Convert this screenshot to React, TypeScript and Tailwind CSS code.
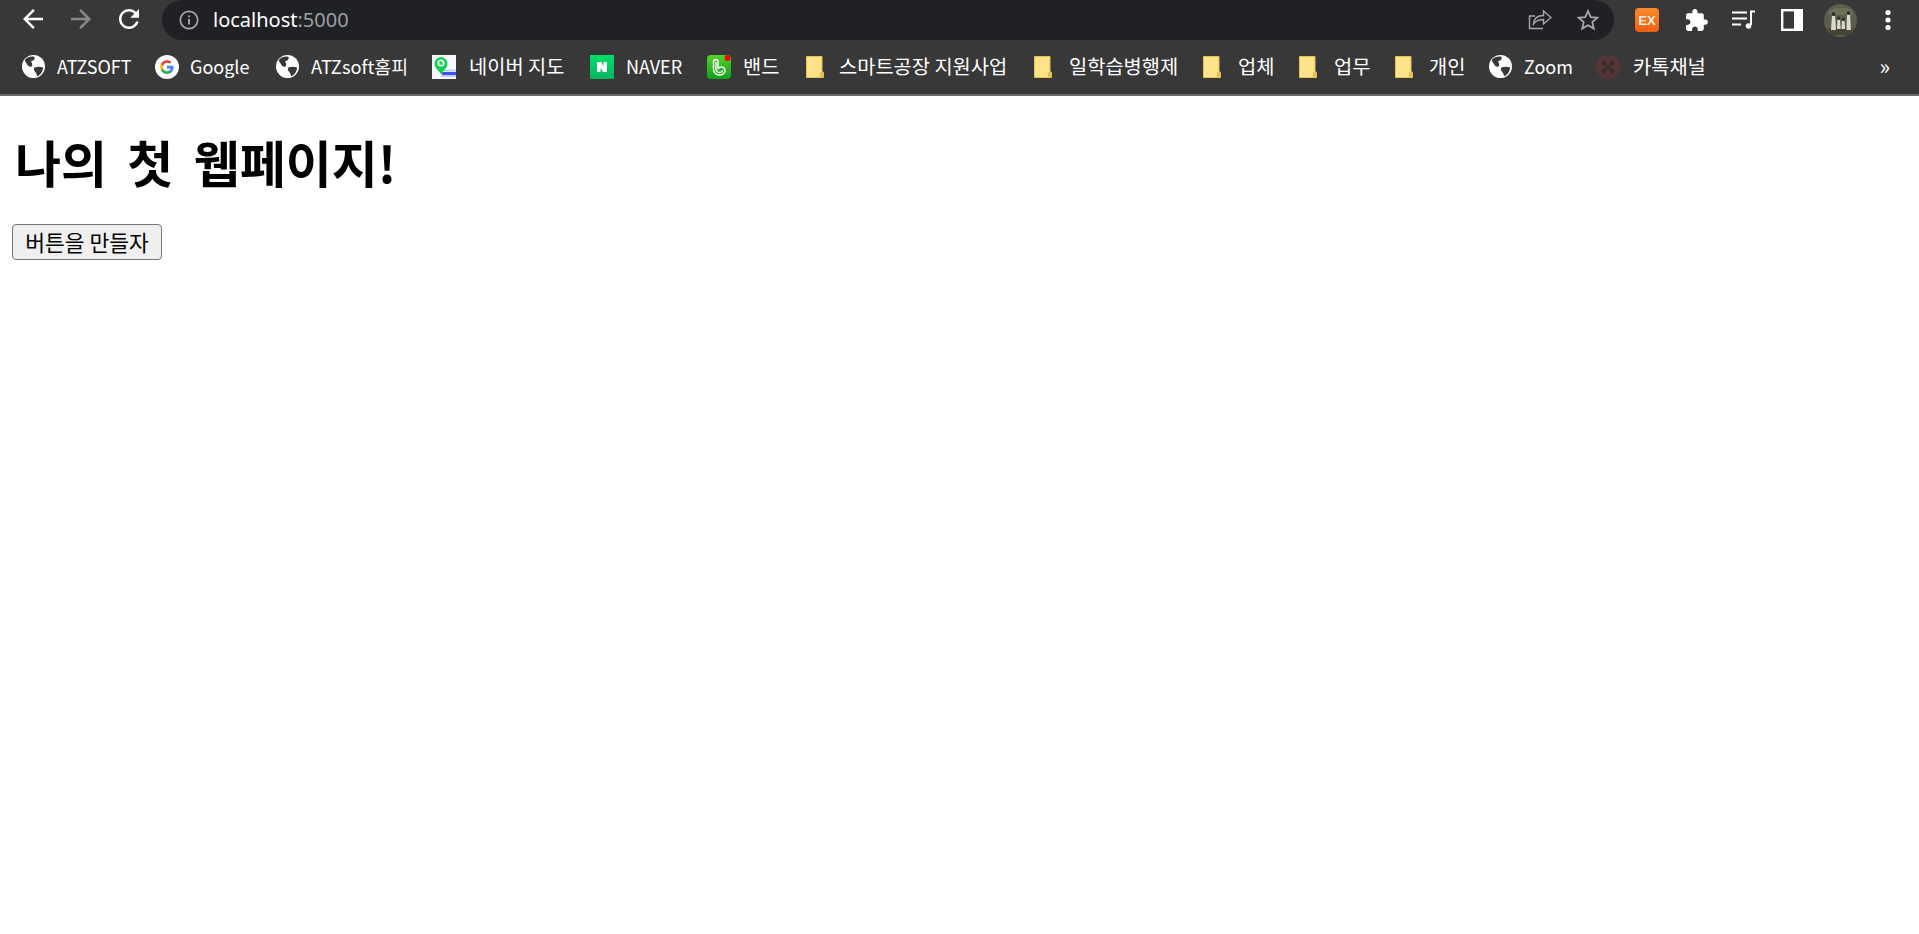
import type { ReactNode } from 'react'

const Globe = () => (
  <svg width="23" height="23" viewBox="0 0 24 24" className="shrink-0">
    <circle cx="12" cy="12" r="12" fill="#fff" />
    <path d="M3 5c3-3 7-4 10-3 1 2-1 4-3 4-1 2 2 3 0 6-2 1-4-1-5-3-1-1-2-2-2-4zM13 13c3-1 6-1 9 0 0 4-3 8-6 9-1-2-1-3-2-4-2-2-2-4-1-5z" fill="#383838" />
  </svg>
)

const GoogleIcon = () => (
  <svg width="24" height="24" viewBox="0 0 24 24" className="shrink-0">
    <circle cx="12" cy="12" r="12" fill="#fff" />
    <path d="M18.6 12.2c0-.5 0-1-.1-1.400H12v2.700h3.700c-.2.900-.6 1.600-1.400 2.100v1.700h2.200c1.300-1.200 2.100-3 2.100-5.100z" fill="#4285f4" />
    <path d="M12 19c1.900 0 3.400-.6 4.500-1.700l-2.200-1.700c-.6.400-1.400.7-2.300.7-1.800 0-3.300-1.200-3.900-2.900H5.900v1.800C7 17.500 9.300 19 12 19z" fill="#34a853" />
    <path d="M8.100 13.400a4.200 4.200 0 010-2.700V8.900H5.900a7 7 0 000 6.300z" fill="#fbbc05" />
    <path d="M12 7.800c1 0 1.900.3 2.600 1l2-2A7 7 0 005.900 8.900l2.200 1.800C8.700 9 10.200 7.800 12 7.800z" fill="#ea4335" />
  </svg>
)

const MapIcon = () => (
  <svg width="24" height="24" viewBox="0 0 24 24" className="shrink-0">
    <rect width="24" height="24" fill="#f6f9ff" />
    <path d="M10 14.500h14v2H12z" fill="#c3cdf8" />
    <path d="M10 17h14v3H10z" fill="#3f55e6" />
    <path d="M9 20h15v2H9z" fill="#c3cdf8" />
    <path d="M9 2a6.500 6.500 0 00-6.500 6.500C2.500 13 7 15.500 9 19.500c2-4 6.500-6.500 6.500-11A6.500 6.500 0 009 2z" fill="#12d24f" />
    <circle cx="9" cy="8" r="3.500" fill="#fff" />
    <path d="M7.400 6h1.100l1 1.800V6h1.100v4H9.500l-1-1.800V10H7.400z" fill="#12d24f" />
  </svg>
)

const NaverIcon = () => (
  <svg width="24" height="24" viewBox="0 0 24 24" className="shrink-0">
    <defs>
      <linearGradient id="nv" x1="0" y1="0" x2="0" y2="1">
        <stop offset="0" stopColor="#03de6a" />
        <stop offset="1" stopColor="#03b25f" />
      </linearGradient>
    </defs>
    <rect width="24" height="24" fill="url(#nv)" />
    <path d="M7 7h4l2.500 4V7H17v10h-4l-2.500-4v4H7z" fill="#fff" />
  </svg>
)

const BandIcon = () => (
  <svg width="24" height="24" viewBox="0 0 24 24" className="shrink-0">
    <defs>
      <linearGradient id="bd" x1="0" y1="0" x2="0" y2="1">
        <stop offset="0" stopColor="#55d32a" />
        <stop offset="1" stopColor="#0fa01a" />
      </linearGradient>
    </defs>
    <rect width="24" height="24" rx="4" fill="url(#bd)" />
    <path d="M6.500 7c0-3.500 4.500-3.500 4.500 0v7c1.500-3 7-2.500 7 1.500 0 3-3 4.500-5.500 4.500-3.500 0-6-2.500-6-6z" fill="none" stroke="#fff" strokeWidth="1.500" />
    <path d="M9 7v6.500c0 2.500 1.500 4 3.500 4 1.500 0 3-1 3-2.200" fill="none" stroke="#fff" strokeWidth="1.300" />
    <circle cx="20.500" cy="3" r="3" fill="#f00" />
  </svg>
)

const FolderIcon = () => (
  <svg width="18" height="22" viewBox="0 0 18 22" className="shrink-0">
    <path d="M.5.500h15.500v15l1.500 1v5H.5z" fill="#ffe38a" stroke="#e6bf4e" />
    <path d="M14 21v-4l1.500-1.500h1.500v6z" fill="#e6bf4e" />
  </svg>
)

const KakaoIcon = () => (
  <svg width="24" height="24" viewBox="0 0 24 24" className="shrink-0">
    <circle cx="12" cy="12" r="12" fill="#553636" />
    <path d="M8 8l8 8M16 8l-8 8" stroke="#382c2c" strokeWidth="1.800" />
    <circle cx="8" cy="8" r="2.400" fill="#382c2c" />
    <circle cx="16" cy="8" r="2.400" fill="#382c2c" />
    <circle cx="8" cy="16" r="2.400" fill="#382c2c" />
    <circle cx="16" cy="16" r="2.400" fill="#382c2c" />
  </svg>
)

const bookmarks: { icon: ReactNode; label: string; box: string }[] = [
  { icon: <Globe />, label: 'ATZSOFT', box: 'ml-[12px] w-[72px] text-[18px]' },
  { icon: <GoogleIcon />, label: 'Google', box: 'ml-[11px] w-[60px] text-[18px]' },
  { icon: <Globe />, label: 'ATZsoft홈피', box: 'ml-[12px] w-[95px] text-[18.3px]' },
  { icon: <MapIcon />, label: '네이버 지도', box: 'ml-[13px] w-[95px] text-[19.8px]' },
  { icon: <NaverIcon />, label: 'NAVER', box: 'ml-[12px] w-[55px] text-[18px]' },
  { icon: <BandIcon />, label: '밴드', box: 'ml-[12px] w-[37px] text-[19.8px]' },
  { icon: <FolderIcon />, label: '스마트공장 지원사업', box: 'ml-[15px] w-[169px] text-[19.8px]' },
  { icon: <FolderIcon />, label: '일학습병행제', box: 'ml-[17px] w-[108px] text-[19.8px]' },
  { icon: <FolderIcon />, label: '업체', box: 'ml-[17px] w-[35px] text-[19.8px]' },
  { icon: <FolderIcon />, label: '업무', box: 'ml-[17px] w-[35px] text-[19.8px]' },
  { icon: <FolderIcon />, label: '개인', box: 'ml-[16px] w-[34px] text-[19.8px]' },
  { icon: <Globe />, label: 'Zoom', box: 'ml-[12px] w-[46px] text-[18px]' },
  { icon: <KakaoIcon />, label: '카톡채널', box: 'ml-[13px] w-[70px] text-[19.8px]' },
]

export default function App() {
  return (
    <div className="min-h-[934px] bg-white font-['Noto_Sans_CJK_KR','Noto_Sans',sans-serif] text-black">
      {/* Browser chrome */}
      <div className="bg-[#383838] border-b-2 border-[#6b6b6b]">
        <div className="flex items-start h-10">
          <div className="flex items-center gap-[18px] h-10 w-[162px] shrink-0 pl-[18px]">
            <svg width="30" height="30" viewBox="0 0 24 24" fill="#fff" className="-mt-[2px] shrink-0">
              <path d="M20 11H7.830l5.590-5.590L12 4l-8 8 8 8 1.410-1.410L7.830 13H20v-2z" />
            </svg>
            <svg width="30" height="30" viewBox="0 0 24 24" fill="#8a8a8a" className="-mt-[2px] shrink-0">
              <path d="M12 4l-1.410 1.410L16.170 11H4v2h12.170l-5.580 5.590L12 20l8-8z" />
            </svg>
            <svg width="30" height="30" viewBox="0 0 24 24" fill="#fff" className="-mt-[2px] shrink-0">
              <path d="M17.650 6.350C16.200 4.900 14.210 4 12 4c-4.420 0-7.990 3.580-7.990 8s3.570 8 7.990 8c3.730 0 6.840-2.550 7.730-6h-2.080c-.820 2.330-3.040 4-5.650 4-3.310 0-6-2.690-6-6s2.690-6 6-6c1.660 0 3.140.690 4.220 1.780L13 11h7V4l-2.350 2.350z" />
            </svg>
          </div>
          <div className="flex items-center h-10 w-[1452px] shrink-0 bg-[#202124] rounded-[20px] pl-[17px] pr-[15px]">
            <svg width="20" height="20" viewBox="0 0 20 20" fill="none" className="shrink-0">
              <circle cx="10" cy="10" r="8.700" stroke="#a8a9ab" strokeWidth="1.700" />
              <path d="M10 9v5.500M10 5.500v1.800" stroke="#a8a9ab" strokeWidth="1.900" />
            </svg>
            <div className="ml-[14px] text-[20px] leading-none font-['Noto_Sans',sans-serif] -mt-[1px]">
              <span className="text-white">localhost</span>
              <span className="text-[#9aa0a6]">:5000</span>
            </div>
            <div className="ml-auto flex items-center gap-[25px]">
              <svg width="24" height="24" viewBox="0 0 24 24" fill="none" stroke="#a8a9ab" strokeWidth="1.400">
                <path d="M15 20.500H1.500V8H7" />
                <path d="M5.500 16c.500-6 4.500-8.500 10-8.500V3L23 9.500l-7.500 6.500v-4.500c-4 0-7.500 1-10 4.500z" />
              </svg>
              <svg width="22" height="22" viewBox="0 0 22 22" fill="none" stroke="#a8a9ab" strokeWidth="1.800">
                <path d="M11 2l2.700 6.100 6.600.6-5 4.400 1.500 6.500L11 16.200l-5.800 3.400 1.500-6.500-5-4.400 6.600-.6z" />
              </svg>
            </div>
          </div>
          <div className="flex items-center h-10 flex-1 pl-[21px]">
            <div className="flex items-center justify-center w-6 h-6 shrink-0 rounded bg-gradient-to-b from-[#f78a2b] to-[#ee5f14] text-[13px] leading-none font-bold text-[#ffeedd] font-['Liberation_Sans',sans-serif]">
              EX
            </div>
            <svg width="25" height="25" viewBox="0 0 24 24" fill="#fff" className="ml-[25px] -mr-[1px] shrink-0">
              <path d="M20.500 11H19V7c0-1.100-.900-2-2-2h-4V3.500C13 2.120 11.880 1 10.500 1S8 2.120 8 3.500V5H4c-1.100 0-1.990.900-1.990 2v3.800H3.500c1.490 0 2.700 1.210 2.700 2.700s-1.210 2.700-2.700 2.700H2V20c0 1.100.900 2 2 2h3.800v-1.500c0-1.490 1.210-2.700 2.700-2.700 1.490 0 2.700 1.210 2.700 2.700V22H17c1.100 0 2-.900 2-2v-4h1.500c1.380 0 2.500-1.120 2.500-2.500S21.880 11 20.500 11z" />
            </svg>
            <svg width="24" height="22" viewBox="0 0 24 22" fill="none" stroke="#fff" strokeWidth="2" className="ml-[24px] shrink-0">
              <path d="M0 3.500h15M0 9.500h15M0 15.500h9" />
              <path d="M19 16V2.500h4" />
              <circle cx="16.500" cy="17" r="2.800" fill="#fff" stroke="none" />
            </svg>
            <svg width="22" height="22" viewBox="0 0 22 22" className="ml-[25px] shrink-0">
              <rect x="1.200" y="1.200" width="19.600" height="19.600" fill="none" stroke="#fff" strokeWidth="2.400" />
              <rect x="13" y="1" width="8" height="20" fill="#fff" />
            </svg>
            <svg width="33" height="33" viewBox="0 0 33 33" className="ml-[21px] shrink-0">
              <circle cx="16.500" cy="16.500" r="16.500" fill="#5c5e4c" />
              <path d="M6 6c7-3 15-3 21 0l2 5H4z" fill="#6d6f5b" />
              <path d="M3 24h27l-5 7H8z" fill="#474436" />
              <path d="M8 12h3l.5 6 .5 8H7l.5-8zM13.500 16h2.500l.7 9h-3.700zM18 17h2.500l.6 8h-3.600zM23 11h3l1 15h-4.500z" fill="#dcd9cf" />
              <circle cx="9.500" cy="10" r="1.800" fill="#332a24" />
              <circle cx="14.800" cy="14" r="1.600" fill="#332a24" />
              <circle cx="19.300" cy="15" r="1.600" fill="#332a24" />
              <circle cx="24.500" cy="9" r="1.800" fill="#332a24" />
            </svg>
            <svg width="8" height="24" viewBox="0 0 8 24" fill="#fff" className="ml-[27px] shrink-0">
              <circle cx="4" cy="4.500" r="2.600" />
              <circle cx="4" cy="12" r="2.600" />
              <circle cx="4" cy="19.500" r="2.600" />
            </svg>
          </div>
        </div>
        <div className="flex items-center h-[54px] pl-[22px] pb-[1px] text-white leading-none">
          {bookmarks.map((b) => (
            <div key={b.label} className="flex items-center mr-[26px]">
              {b.icon}
              <span className={`${b.box} whitespace-nowrap -mt-[1px]`}>{b.label}</span>
            </div>
          ))}
          <span className="ml-auto mr-[29px] text-[22px] -mt-[3px]">»</span>
        </div>
      </div>

      {/* Page */}
      <div className="px-3">
        <h1 className="text-[50px] font-bold leading-[70px] mt-[30px] pl-[3px] [word-spacing:9px]">나의 첫 웹페이지!</h1>
        <button className="mt-[28px] h-[36px] w-[150px] bg-[#efefef] border-[1.5px] border-[#767676] rounded-[4px] text-[21.5px] leading-none">
          버튼을 만들자
        </button>
      </div>
    </div>
  )
}
